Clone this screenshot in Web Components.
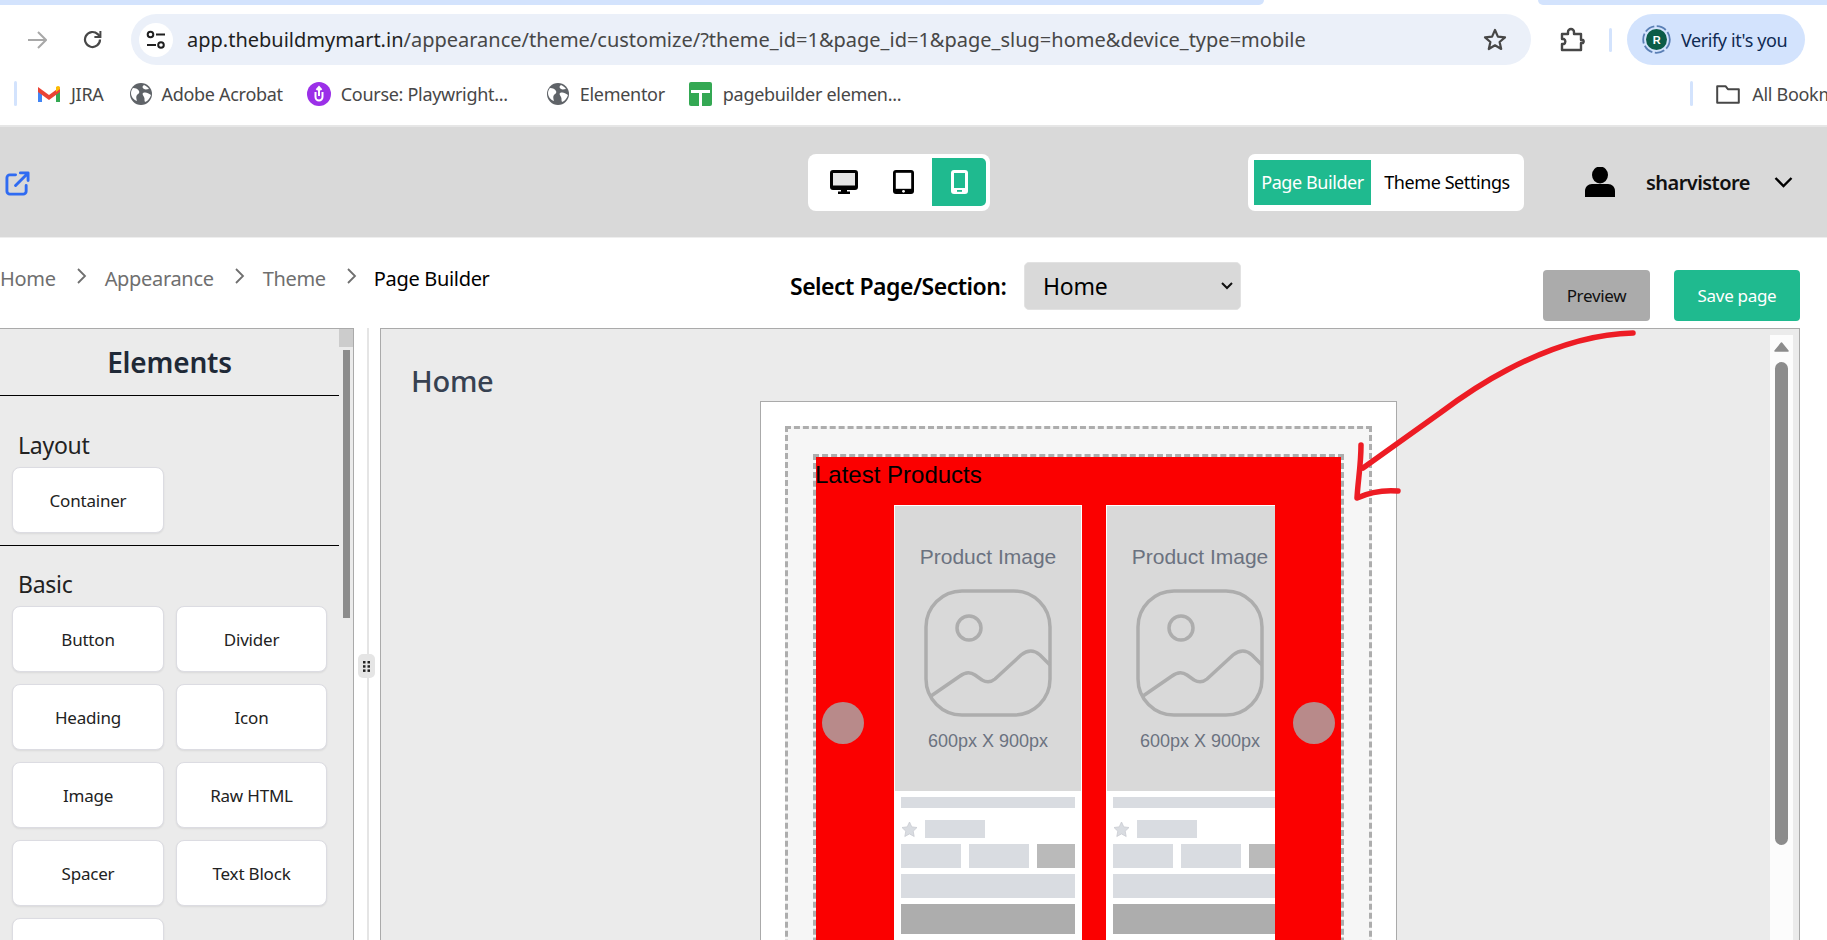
<!DOCTYPE html>
<html>
<head>
<meta charset="utf-8">
<title>Page Builder</title>
<style>
    html, body { margin: 0; padding: 0; background: #fff; }
    body {
        position: relative;
        width: 1827px;
        height: 940px;
        overflow: hidden;
        font-family: "Noto Sans", "Liberation Sans", sans-serif;
        letter-spacing: -0.25px;
        color: #000;
    }
</style>
</head>
<body>
<browser-bar></browser-bar>
<app-header></app-header>
<page-toolbar></page-toolbar>
<builder-main>
    <elements-panel slot="left"></elements-panel>
    <canvas-panel slot="right"></canvas-panel>
</builder-main>
<red-arrow></red-arrow>

<script>
const GLOBE = `<svg width="22" height="22" viewBox="0 0 22 22"><circle cx="11" cy="11" r="11" fill="#5f6368"/><path d="M3 5c3 0 5 1 6 3s-1 3-2 4-1 3 0 6c-3-1-6-4-6-8 0-2 1-4 2-5zM14 2c2 1 4 2 5 4-2 0-3 1-5 0s-2-3 0-4zM13 10c3-1 5 0 8 2-1 3-3 6-6 7-1-2 0-3-1-5s-2-3-1-4z" fill="#fff"/></svg>`;

customElements.define('browser-bar',
class extends HTMLElement {
    connectedCallback() {
        if (this.shadowRoot) { return; }
        const shadow = this.attachShadow({mode: 'open'});
        shadow.innerHTML = `
        <style>
            :host { display: block; height: 127px; box-sizing: border-box; border-bottom: 2px solid #e6e6e6; background: #fff; overflow: hidden; }
            .strip { height: 5px; display: flex; }
            .strip i { display: block; background: #d3e3fd; height: 5px; }
            .strip .a { width: 1264px; border-radius: 0 0 6px 0; }
            .strip .b { margin-left: 274px; flex: 1; border-radius: 0 0 0 8px; }
            .row1 { display: flex; align-items: center; margin-top: 9px; height: 51px; }
            .back { margin-left: 28px; width: 19px; height: 18px; }
            .reload { margin-left: 36px; width: 19px; height: 19px; }
            .pill {
                margin-left: 29px; width: 1400px; height: 51px; border-radius: 26px; background: #ebf0f9;
                display: flex; align-items: center; box-sizing: border-box; padding-left: 8px;
            }
            .tune { width: 34px; height: 34px; border-radius: 50%; background: #fff; display: flex; align-items: center; justify-content: center; }
            .url { margin-left: 14px; font-size: 20px; color: #474747; flex: 1; white-space: nowrap; letter-spacing: 0px; }
            .url b { font-weight: 400; color: #1f1f1f; }
            .star { margin-right: 24px; }
            .puzzle { margin-left: 29px; }
            .sep { width: 3px; height: 24px; background: #d3e3fd; border-radius: 2px; margin-left: 24px; }
            .verify {
                margin-left: 15px; width: 178px; height: 51px; border-radius: 26px; background: #d3e3fd; box-sizing: border-box;
                padding-left: 15px; display: flex; align-items: center; gap: 10px; font-size: 18px; color: #0f2a52; letter-spacing: -0.4px;
            }
            .row2 { display: flex; align-items: center; margin-top: 11px; height: 35px; font-size: 18px; color: #474747; white-space: nowrap; letter-spacing: -0.3px; }
            .row2 > * { display: block; flex: none; }
            .bsep { width: 3px; height: 25px; background: #d3e3fd; border-radius: 2px; }
        </style>
        <div class="strip"><i class="a"></i><i class="b"></i></div>
        <div class="row1">
            <svg class="back" viewBox="0 0 19 18" fill="none" stroke="#a8a8a8" stroke-width="2"><path d="M0 9h18M10 1l8 8-8 8"/></svg>
            <svg class="reload" viewBox="0 0 19 19" fill="none" stroke="#474747" stroke-width="2.2"><path d="M17 9.5a7.5 7.5 0 1 1-2.3-5.4L17 6.3"/><path d="M17.4 1v6h-6" fill="none" stroke-width="2"/></svg>
            <div class="pill">
                <div class="tune">
                    <svg width="20" height="20" viewBox="0 0 20 20" fill="none" stroke="#1f1f1f" stroke-width="2"><circle cx="4.5" cy="4.5" r="2.8"/><path d="M10 4.5h9M1 15h9"/><circle cx="15" cy="15" r="2.8"/></svg>
                </div>
                <div class="url"><b>app.thebuildmymart.in</b>/appearance/theme/customize/?theme_id=1&amp;page_id=1&amp;page_slug=home&amp;device_type=mobile</div>
                <svg class="star" width="24" height="23" viewBox="0 0 24 23" fill="none" stroke="#474747" stroke-width="2.2" stroke-linejoin="round"><path d="M12 2l2.9 6.6 7.1.7-5.4 4.7 1.6 7L12 17.3 5.8 21l1.6-7L2 9.3l7.1-.7z"/></svg>
            </div>
            <svg class="puzzle" width="25" height="25" viewBox="0 0 25 25" fill="none" stroke="#474747" stroke-width="2.4" stroke-linejoin="round"><path d="M2 6h6V4a3 3 0 0 1 6 0v2h7v6h2a2 2 0 0 1 0 3h-2v7H2v-6h2a3 3 0 0 0 0-5H2z" transform="translate(0 1)"/></svg>
            <div class="sep"></div>
            <div class="verify">
                <svg width="29" height="29" viewBox="0 0 29 29"><circle cx="14.5" cy="14.5" r="13.3" fill="none" stroke="#5a7fb5" stroke-width="1.8" stroke-dasharray="10 2.5"/><circle cx="14.5" cy="14.5" r="10.5" fill="#0c5c48"/><text x="14.5" y="18.5" text-anchor="middle" font-size="11" font-weight="600" fill="#fff" font-family="Liberation Sans">R</text></svg>
                <span>Verify it's you</span>
            </div>
        </div>
        <div class="row2">
            <div class="bsep" style="margin-left:14px"></div>
            <svg style="margin-left:21px" width="22" height="18" viewBox="0 0 22 18"><path d="M0 4v13h4V7z" fill="#4285f4"/><path d="M22 4v13h-4V7z" fill="#34a853"/><path d="M0 2l11 8 11-8v5l-11 8L0 7z" fill="#ea4335"/><path d="M18 7l4-3V3c0-2-2-3-4-1z" fill="#fbbc04"/></svg>
            <span style="margin-left:11px">JIRA</span>
            <span style="margin-left:26px;height:22px">${GLOBE}</span>
            <span style="margin-left:10px">Adobe Acrobat</span>
            <svg style="margin-left:24px" width="24" height="24" viewBox="0 0 24 24"><circle cx="12" cy="12" r="12" fill="#9b30e8"/><path d="M8.5 10v5a3.5 3.5 0 0 0 7 0v-5" fill="none" stroke="#fff" stroke-width="2"/><path d="M12 14V6M9.5 8L12 5l2.5 3" fill="none" stroke="#fff" stroke-width="2"/></svg>
            <span style="margin-left:10px">Course: Playwright...</span>
            <span style="margin-left:39px;height:22px">${GLOBE}</span>
            <span style="margin-left:11px">Elementor</span>
            <svg style="margin-left:24px" width="23" height="24" viewBox="0 0 23 24"><rect width="23" height="24" rx="2" fill="#34a853"/><path d="M2 8h19v3H2zM10 8h3v16h-3z" fill="#fff"/></svg>
            <span style="margin-left:11px">pagebuilder elemen...</span>
            <div class="bsep" style="margin-left:789px"></div>
            <svg style="margin-left:23px" width="24" height="20" viewBox="0 0 24 20" fill="none" stroke="#474747" stroke-width="2" stroke-linejoin="round"><path d="M1.2 2.2h8.3l2.4 3h10.9v13.6H1.2z"/></svg>
            <span style="margin-left:12px">All Bookmarks</span>
        </div>
        `;
    }
});

customElements.define('app-header',
class extends HTMLElement {
    connectedCallback() {
        if (this.shadowRoot) { return; }
        const shadow = this.attachShadow({mode: 'open'});
        shadow.innerHTML = `
        <style>
            :host { display: flex; align-items: center; height: 110px; background: #d9d9d9; padding-left: 5px; }
            .ext { flex: none; width: 25px; height: 25px; margin-top: 2px; }
            .devices {
                margin-left: 778px; display: flex; background: #fff; border-radius: 8px; box-sizing: border-box;
                height: 57px; padding: 4px 4px 5px 5px;
            }
            .devices div { display: flex; align-items: center; justify-content: center; }
            .d1 { width: 62px; }
            .d2 { width: 57px; }
            .d3 { width: 54px; background: #1fba8f; border-radius: 0 5px 5px 0; }
            .tabs {
                margin-left: 258px; display: flex; background: #fff; border-radius: 7px; box-sizing: border-box;
                height: 57px; width: 276px; padding: 6px; font-size: 18px; letter-spacing: -0.42px;
            }
            .tabs div { display: flex; align-items: center; justify-content: center; height: 45px; }
            .on { width: 117px; background: #1fba8f; color: #fff; }
            .off { flex: 1; padding-left: 5px; }
            .user { margin-left: 60px; display: flex; align-items: center; }
            .name { margin-left: 30px; font-size: 20px; font-weight: 600; color: #111; width: 113px; white-space: nowrap; letter-spacing: -0.55px; }
            .chev { margin-left: 15px; }
        </style>
        <svg class="ext" viewBox="0 0 26 26" fill="none" stroke="#2f6bf2" stroke-width="3" stroke-linecap="round" stroke-linejoin="round"><path d="M11 4H5a3 3 0 0 0-3 3v14a3 3 0 0 0 3 3h14a3 3 0 0 0 3-3v-6"/><path d="M11 15L24 2M16 2h8v8"/></svg>
        <div class="devices">
            <div class="d1">
                <svg width="28" height="24" viewBox="0 0 28 24"><path d="M3 0h22a3 3 0 0 1 3 3v14a3 3 0 0 1-3 3h-8v1.500h3V24H8v-2.500h3V20H3a3 3 0 0 1-3-3V3a3 3 0 0 1 3-3z" fill="#000"/><rect x="3" y="3" width="22" height="12.500" fill="#e4e4e4"/></svg>
            </div>
            <div class="d2">
                <svg width="21" height="24" viewBox="0 0 21 24"><rect width="21" height="24" rx="3" fill="#000"/><rect x="2.800" y="2.800" width="15.400" height="16" fill="#fff"/><circle cx="10.500" cy="21.300" r="1.400" fill="#fff"/></svg>
            </div>
            <div class="d3">
                <svg width="17" height="24" viewBox="0 0 17 24"><rect width="17" height="24" rx="3" fill="#fff"/><rect x="3" y="3" width="11" height="15" fill="#1fba8f"/><rect x="6" y="20" width="5" height="1.800" fill="#1fba8f"/></svg>
            </div>
        </div>
        <div class="tabs">
            <div class="on">Page Builder</div>
            <div class="off">Theme Settings</div>
        </div>
        <div class="user">
            <svg width="32" height="30" viewBox="0 0 32 30"><ellipse cx="16" cy="8" rx="8" ry="8.500" fill="#000"/><path d="M1 30v-6c0-4 3-7 7-7h16c4 0 7 3 7 7v6z" fill="#000"/></svg>
            <div class="name">sharvistore</div>
            <svg class="chev" width="19" height="12" viewBox="0 0 19 12" fill="none" stroke="#000" stroke-width="2.400"><path d="M1.500 2l8 8 8-8"/></svg>
        </div>
        `;
    }
});

customElements.define('page-toolbar',
class extends HTMLElement {
    connectedCallback() {
        if (this.shadowRoot) { return; }
        const shadow = this.attachShadow({mode: 'open'});
        shadow.innerHTML = `
        <style>
            :host { display: flex; height: 91px; background: #fff; align-items: flex-start; padding-right: 27px; box-sizing: border-box; border-top: 1px solid #eee; }
            .crumbs { width: 790px; flex: none; display: flex; align-items: center; height: 28px; margin-top: 26px; font-size: 20px; color: #6f6f6f; white-space: nowrap; letter-spacing: -0.32px; }
            .crumbs svg { margin: 0 0 4px 0; flex: none; }
            .crumbs .cur { color: #000; }
            .sel { display: flex; align-items: center; margin-top: 24px; }
            .sel label { font-size: 23px; font-weight: 600; color: #000; white-space: nowrap; width: 234px; letter-spacing: -0.5px; }
            .box {
                width: 217px; height: 48px; background: #d9d9d9; border: 1px solid #e2e2e2; border-radius: 5px; box-sizing: border-box;
                display: flex; align-items: center; justify-content: space-between; padding: 0 7px 0 18px; font-size: 23px;
            }
            .btns { margin-left: auto; display: flex; gap: 24px; margin-top: 32px; font-size: 17px; letter-spacing: -0.3px; }
            .btn { height: 51px; display: flex; align-items: center; justify-content: center; border-radius: 4px; }
            .prev { width: 107px; background: #ababab; color: #111; }
            .save { width: 126px; background: #1fba8f; color: #fff; }
        </style>
        <div class="crumbs">
            <span>Home</span>
            <svg style="margin-left:20px" width="11" height="16" viewBox="0 0 11 16" fill="none" stroke="#6f6f6f" stroke-width="1.800"><path d="M2 1l7 7-7 7"/></svg>
            <span style="margin-left:18px">Appearance</span>
            <svg style="margin-left:20px" width="11" height="16" viewBox="0 0 11 16" fill="none" stroke="#6f6f6f" stroke-width="1.800"><path d="M2 1l7 7-7 7"/></svg>
            <span style="margin-left:18px">Theme</span>
            <svg style="margin-left:20px" width="11" height="16" viewBox="0 0 11 16" fill="none" stroke="#6f6f6f" stroke-width="1.800"><path d="M2 1l7 7-7 7"/></svg>
            <span class="cur" style="margin-left:17px">Page Builder</span>
        </div>
        <div class="sel">
            <label>Select Page/Section:</label>
            <div class="box">
                <span>Home</span>
                <svg width="12" height="8" viewBox="0 0 12 8" fill="none" stroke="#111" stroke-width="2"><path d="M1 1l5 5 5-5"/></svg>
            </div>
        </div>
        <div class="btns">
            <div class="btn prev">Preview</div>
            <div class="btn save">Save page</div>
        </div>
        `;
    }
});

customElements.define('builder-main',
class extends HTMLElement {
    connectedCallback() {
        if (this.shadowRoot) { return; }
        const shadow = this.attachShadow({mode: 'open'});
        shadow.innerHTML = `
        <style>
            :host { display: flex; height: 612px; overflow: hidden; }
            .split { width: 26px; flex: none; position: relative; display: flex; justify-content: center; background: #fff; }
            .line { width: 2px; background: #e5e5e5; margin-left: 1px; }
            .handle {
                position: absolute; left: 4px; top: 326px; width: 17px; height: 24px; background: #e5e5e5; border-radius: 5px;
                display: flex; align-items: center; justify-content: center;
            }
        </style>
        <slot name="left"></slot>
        <div class="split">
            <div class="line"></div>
            <div class="handle">
                <svg width="7" height="11" viewBox="0 0 7 11" fill="#222"><rect width="2.500" height="2.500"/><rect x="4.500" width="2.500" height="2.500"/><rect y="4.200" width="2.500" height="2.500"/><rect x="4.500" y="4.200" width="2.500" height="2.500"/><rect y="8.400" width="2.500" height="2.500"/><rect x="4.500" y="8.400" width="2.500" height="2.500"/></svg>
            </div>
        </div>
        <slot name="right"></slot>
        `;
    }
});

customElements.define('element-card',
class extends HTMLElement {
    connectedCallback() {
        if (this.shadowRoot) { return; }
        const shadow = this.attachShadow({mode: 'open'});
        shadow.innerHTML = `
        <style>
            :host {
                display: flex; align-items: center; justify-content: center; height: 66px; box-sizing: border-box;
                background: #fff; border: 1px solid #dcdce2; border-radius: 8px; box-shadow: 0 1px 2px rgba(0,0,0,.08);
                font-size: 17px; color: #222; letter-spacing: -0.2px;
            }
        </style>
        <slot></slot>
        `;
    }
});

customElements.define('elements-panel',
class extends HTMLElement {
    connectedCallback() {
        if (this.shadowRoot) { return; }
        const shadow = this.attachShadow({mode: 'open'});
        shadow.innerHTML = `
        <style>
            :host { display: flex; width: 354px; flex: none; box-sizing: border-box; background: #ebebeb; border-top: 1px solid #aaa; border-right: 1px solid #aaa; overflow: hidden; }
            .list { width: 339px; flex: none; }
            h2 { margin: 0; height: 66px; border-bottom: 1px solid #000; font-size: 28px; font-weight: 600; color: #1f2937; text-align: center; line-height: 67px; letter-spacing: -0.2px; }
            h3 { margin: 0; font-size: 23px; font-weight: 400; color: #222; padding-left: 18px; line-height: 30px; }
            .one { margin-top: 34px; }
            .grid { display: grid; grid-template-columns: 152px 151px; gap: 12px; padding: 7px 0 0 12px; }
            hr { border: 0; border-top: 1px solid #000; margin: 12px 0 0 0; }
            .two { margin-top: 23px; }
            .bar { flex: 1; position: relative; display: flex; flex-direction: column; align-items: center; }
            .up { width: 100%; height: 18px; background: #ccc; }
            .thumb { width: 7px; height: 268px; background: #8c8c8c; margin-top: 3px; }
        </style>
        <div class="list">
            <h2>Elements</h2>
            <h3 class="one">Layout</h3>
            <div class="grid"><element-card>Container</element-card></div>
            <hr>
            <h3 class="two">Basic</h3>
            <div class="grid">
                <element-card>Button</element-card>
                <element-card>Divider</element-card>
                <element-card>Heading</element-card>
                <element-card>Icon</element-card>
                <element-card>Image</element-card>
                <element-card>Raw HTML</element-card>
                <element-card>Spacer</element-card>
                <element-card>Text Block</element-card>
                <element-card></element-card>
            </div>
        </div>
        <div class="bar"><div class="up"></div><div class="thumb"></div></div>
        `;
    }
});

customElements.define('product-card',
class extends HTMLElement {
    connectedCallback() {
        if (this.shadowRoot) { return; }
        const shadow = this.attachShadow({mode: 'open'});
        shadow.innerHTML = `
        <style>
            :host { display: block; width: 188px; flex: none; background: #fff; box-sizing: border-box; padding: 1px; font-family: "Liberation Sans", sans-serif; letter-spacing: 0; }
            .img { height: 285px; background: #d9d9d9; display: flex; flex-direction: column; align-items: center; justify-content: center; color: #6b7280; }
            .t1 { font-size: 21px; line-height: 24px; white-space: nowrap; }
            .t2 { font-size: 18px; line-height: 22px; }
            svg.pic { margin: 20px 0 13px; display: block; }
            .body { padding: 6px 6px 8px; display: flex; flex-direction: column; gap: 6px; }
            .g { background: #d9dce1; }
            .row { display: flex; gap: 8px; }
            .b1 { height: 11px; }
            .stars { display: flex; align-items: center; gap: 7px; margin-top: 6px; }
            .r { width: 60px; height: 18px; }
            .c { width: 60px; height: 24px; }
            .d { width: 38px; height: 24px; background: #bababa; }
            .w { height: 24px; }
            .k { height: 30px; background: #adadad; }
        </style>
        <div class="img">
            <div class="t1">Product Image</div>
            <svg class="pic" width="128" height="128" viewBox="0 0 128 128" fill="none" stroke="#adadad" stroke-width="3.500">
                <rect x="2" y="2" width="124" height="124" rx="36"/>
                <circle cx="45" cy="39" r="12"/>
                <path d="M7 107L36 87Q44 81 51 86L58 91Q65 95 71 90L97 66Q107 58 116 66L126 76"/>
            </svg>
            <div class="t2">600px X 900px</div>
        </div>
        <div class="body">
            <div class="g b1"></div>
            <div class="stars">
                <svg width="17" height="17" viewBox="0 0 17 17"><path d="M8.500 1l2.300 4.900 5.200.6-3.800 3.700 1 5.300-4.700-2.600-4.700 2.600 1-5.300L1 6.500l5.200-.6z" fill="#d9dce1" stroke="#c9ccd2" stroke-width=".8"/></svg>
                <div class="g r"></div>
            </div>
            <div class="row"><div class="g c"></div><div class="g c"></div><div class="d"></div></div>
            <div class="g w"></div>
            <div class="k"></div>
        </div>
        `;
    }
});

customElements.define('canvas-panel',
class extends HTMLElement {
    connectedCallback() {
        if (this.shadowRoot) { return; }
        const shadow = this.attachShadow({mode: 'open'});
        shadow.innerHTML = `
        <style>
            :host { display: flex; width: 1420px; flex: none; box-sizing: border-box; background: #ebebeb; border: 1px solid #aaa; border-bottom: 0; overflow: hidden; }
            .content { width: 1389px; flex: none; padding-left: 30px; box-sizing: border-box; }
            h1 { margin: 0; font-size: 29px; font-weight: 500; color: #374151; line-height: 38px; padding-top: 33px; padding-bottom: 1px; }
            .page { margin: 0 0 0 349px; width: 637px; box-sizing: border-box; background: #fff; border: 1px solid #aaa; padding: 24px 24px 0; height: 600px; }
            .outer { border: 3px dashed #adadad; background: #f6f6f6; padding: 25px 25px 0; width: 587px; box-sizing: border-box; }
            .inner { border: 3px dashed #adadad; }
            .red { position: relative; background: #fb0000; height: 600px; font-family: "Liberation Sans", sans-serif; letter-spacing: 0; }
            .title { font-size: 24px; line-height: 36px; color: #000; margin-left: -1px; }
            .slider { display: flex; gap: 24px; width: 381px; margin: 12px 0 0 78px; overflow: hidden; }
            .nav { position: absolute; top: 245px; width: 42px; height: 42px; border-radius: 50%; background: #b88a8a; }
            .l { left: 6px; }
            .rr { right: 6px; }
            .track { width: 23px; flex: none; margin-top: 6px; background: #fcfcfc; display: flex; flex-direction: column; align-items: center; }
            .thumb { width: 13px; height: 483px; border-radius: 7px; background: #8c8c8c; margin-top: 10px; }
        </style>
        <div class="content">
            <h1>Home</h1>
            <div class="page">
                <div class="outer">
                    <div class="inner">
                        <div class="red">
                            <div class="title">Latest Products</div>
                            <div class="slider"><product-card></product-card><product-card></product-card></div>
                            <div class="nav l"></div>
                            <div class="nav rr"></div>
                        </div>
                    </div>
                </div>
            </div>
        </div>
        <div class="track">
            <svg style="margin-top:7px" width="15" height="10" viewBox="0 0 15 10"><path d="M7.500 1L14 9H1z" fill="#8c8c8c" stroke="#8c8c8c" stroke-width="1.500" stroke-linejoin="round"/></svg>
            <div class="thumb"></div>
        </div>
        `;
    }
});

customElements.define('red-arrow',
class extends HTMLElement {
    connectedCallback() {
        if (this.shadowRoot) { return; }
        const shadow = this.attachShadow({mode: 'open'});
        shadow.innerHTML = `
        <style>
            :host { position: absolute; left: 0; top: 0; width: 1827px; height: 940px; pointer-events: none; }
            svg { display: block; }
        </style>
        <svg width="1827" height="940" viewBox="0 0 1827 940" fill="none" stroke="#ed1c24" stroke-width="5.500" stroke-linecap="round" stroke-linejoin="round">
            <path d="M1633 333C1590 334 1545 350 1507 370C1480 384 1460 398 1440 413L1363 468"/>
            <path d="M1361 445C1361 465 1358 480 1357 498C1370 492 1385 490 1398 491"/>
        </svg>
        `;
    }
});
</script>
</body>
</html>
